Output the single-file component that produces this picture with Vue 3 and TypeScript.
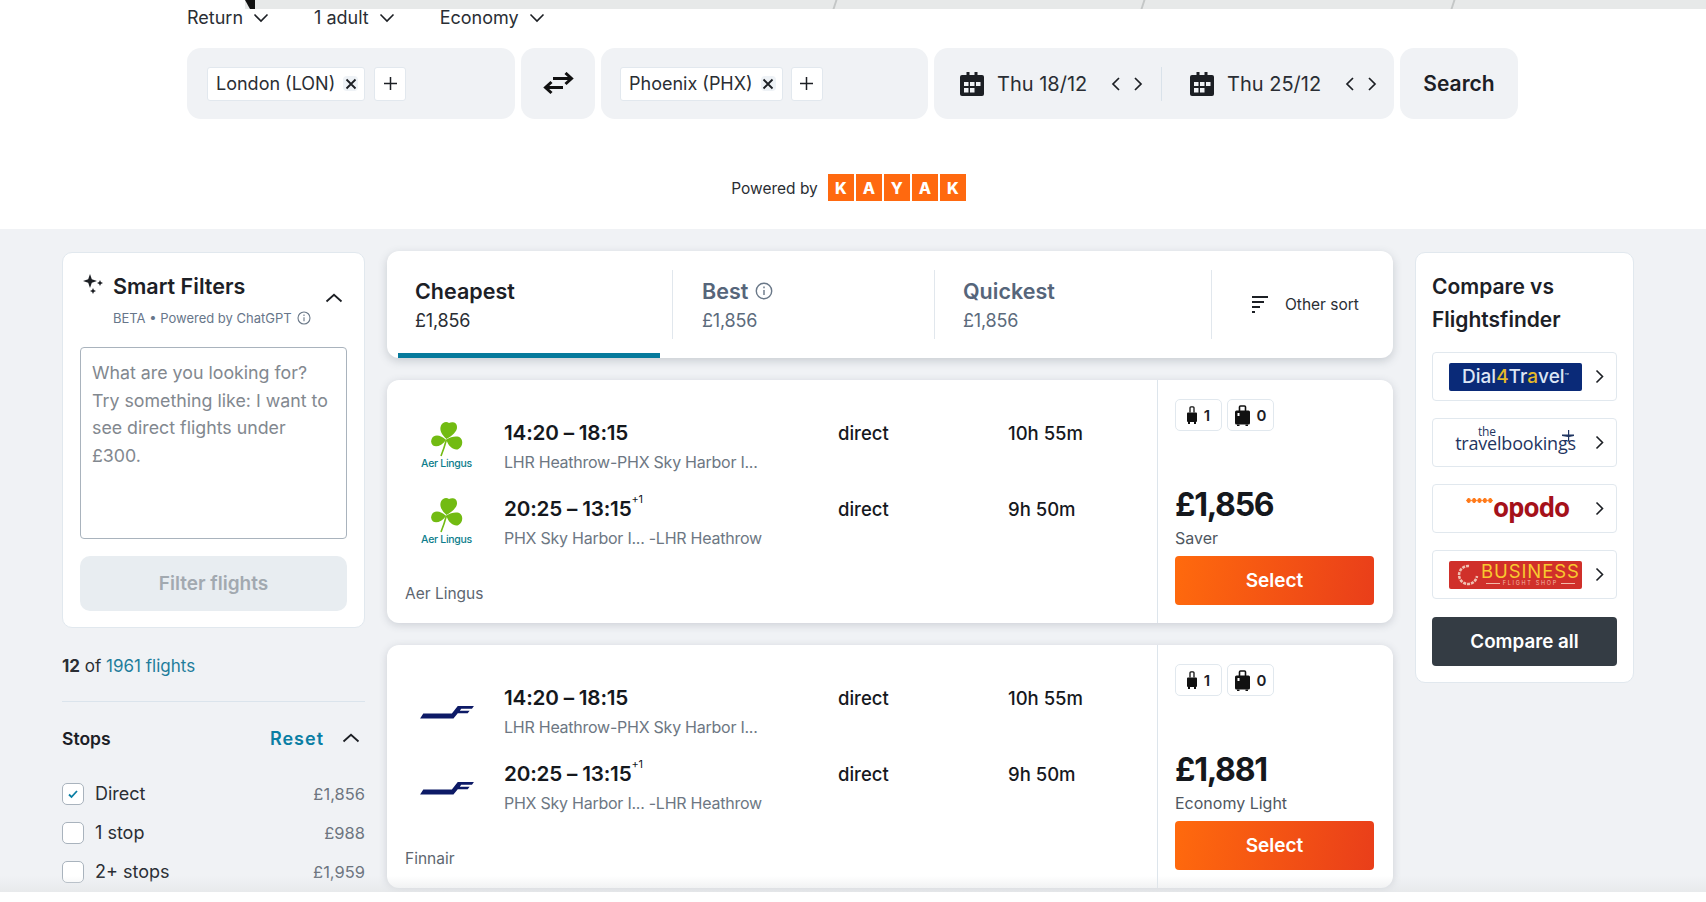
<script setup lang="ts">
interface Leg { time: string; plus: boolean; route: string; duration: string }
interface Flight { kind: 'aer' | 'fin'; airline: string; price: string; fare: string; legs: Leg[] }

const legs: Leg[] = [
  { time: '14:20 – 18:15', plus: false, route: 'LHR Heathrow-PHX Sky Harbor I...', duration: '10h 55m' },
  { time: '20:25 – 13:15', plus: true, route: 'PHX Sky Harbor I... -LHR Heathrow', duration: '9h 50m' },
]
const flights: Flight[] = [
  { kind: 'aer', airline: 'Aer Lingus', price: '£1,856', fare: 'Saver', legs },
  { kind: 'fin', airline: 'Finnair', price: '£1,881', fare: 'Economy Light', legs },
]
const options = ['Return', '1 adult', 'Economy']
const places = ['London (LON)', 'Phoenix (PHX)']
const dates = ['Thu 18/12', 'Thu 25/12']
const kayak = ['K', 'A', 'Y', 'A', 'K']
const stops = [
  { label: 'Direct', price: '£1,856', on: true },
  { label: '1 stop', price: '£988', on: false },
  { label: '2+ stops', price: '£1,959', on: false },
]
const tabs = [
  { name: 'Cheapest', price: '£1,856', info: false },
  { name: 'Best', price: '£1,856', info: true },
  { name: 'Quickest', price: '£1,856', info: false },
]
</script>

<template>
  <div class="page">
    <header class="top">
      <div class="strip">
        <i class="mark"></i><i class="slash s1"></i><i class="slash s2"></i><i class="slash s3"></i>
      </div>
      <div class="options">
        <div v-for="o in options" :key="o" class="option">
          <span>{{ o }}</span>
          <svg width="16" height="10" viewBox="0 0 16 10"><path d="M1.500 1.500 8 8l6.500-6.500" class="ln" stroke-width="1.600" /></svg>
        </div>
      </div>
      <div class="search">
        <template v-for="(p, i) in places" :key="p">
          <div class="pill place">
            <div class="chip">
              <span>{{ p }}</span>
              <span class="x">
                <svg width="12" height="12" viewBox="0 0 12 12"><path d="M1.500 1.500l9 9m0-9-9 9" class="ln" stroke-width="1.800" /></svg>
              </span>
            </div>
            <div class="chip plus">
              <svg width="15" height="15" viewBox="0 0 15 15"><path d="M7.500 1v13M1 7.500h13" class="ln" stroke-width="1.500" /></svg>
            </div>
          </div>
          <div v-if="i === 0" class="pill swap">
            <svg width="32" height="24" viewBox="0 0 32 24">
              <path d="M11 6.500h18M23.500 1l6 5.500-6 5.500" fill="none" stroke="#111" stroke-width="3" />
              <path d="M21 15.500H3.500M9.500 10l-6 5.500 6 5.500" fill="none" stroke="#111" stroke-width="3" />
            </svg>
          </div>
        </template>
        <div class="pill dates">
          <div v-for="d in dates" :key="d" class="date">
            <svg width="24" height="24" viewBox="0 0 24 24">
              <path d="M6.500 0h3v4h-3zM14.500 0h3v4h-3z" fill="#1c1f24" />
              <path d="M0 5a2 2 0 0 1 2-2h20a2 2 0 0 1 2 2v17a2 2 0 0 1-2 2H2a2 2 0 0 1-2-2z" fill="#1c1f24" />
              <path d="M4 10h4.500v4H4zM10 10h4.500v4H10zM16 10h4.500v4H16zM4 16h4.500v4.500H4zM10 16h4.500v4.500H10z" fill="#f0f2f5" />
            </svg>
            <span class="date-text">{{ d }}</span>
            <svg class="arrow" width="10" height="16" viewBox="0 0 10 16"><path d="M8 2 2 8l6 6" class="ln" stroke-width="1.700" /></svg>
            <svg class="arrow next" width="10" height="16" viewBox="0 0 10 16"><path d="m2 2 6 6-6 6" class="ln" stroke-width="1.700" /></svg>
          </div>
        </div>
        <div class="pill go">Search</div>
      </div>
      <div class="powered">
        <span class="powered-text">Powered by</span>
        <div class="kayak"><b v-for="(k, i) in kayak" :key="i">{{ k }}</b></div>
      </div>
    </header>

    <main class="main">
      <aside class="left">
        <section class="smart">
          <div class="smart-head">
            <svg class="spark" width="22" height="22" viewBox="0 0 22 22">
              <path d="M8 1l1.800 5.200L15 8l-5.200 1.800L8 15l-1.800-5.200L1 8l5.200-1.800z" fill="#1c1f24" />
              <path d="M18 7l.9 2.100L21 10l-2.100.9L18 13l-.9-2.100L15 10l2.100-.9z" fill="#1c1f24" />
              <path d="M11 15l.9 2.100L14 18l-2.100.9L11 21l-.9-2.100L8 18l2.100-.9z" fill="#1c1f24" />
            </svg>
            <div>
              <div class="smart-title">Smart Filters</div>
              <div class="smart-sub">
                BETA • Powered by ChatGPT
                <svg width="14" height="14" viewBox="0 0 14 14"><circle cx="7" cy="7" r="6" class="info" /><path d="M7 6.200v4M7 3.500v1.400" class="info" /></svg>
              </div>
            </div>
            <svg class="up" width="18" height="10" viewBox="0 0 18 10"><path d="M1.500 8.500 9 1.800l7.500 6.700" class="ln" stroke-width="1.800" /></svg>
          </div>
          <div class="prompt">What are you looking for? Try something like: I want to see direct flights under £300.</div>
          <div class="filter-btn">Filter flights</div>
        </section>
        <div class="count"><b>12</b> of <span>1961 flights</span></div>
        <div class="stops-head">
          <strong>Stops</strong>
          <span class="reset">Reset</span>
          <svg width="18" height="10" viewBox="0 0 18 10"><path d="M1.500 8.500 9 1.800l7.500 6.700" class="ln" stroke-width="1.800" /></svg>
        </div>
        <div v-for="s in stops" :key="s.label" class="stop">
          <span class="box">
            <svg v-if="s.on" width="12" height="10" viewBox="0 0 12 10"><path d="M2 5.500 4.500 8 10 2" fill="none" stroke="#0a7ea4" stroke-width="1.800" /></svg>
          </span>
          <span class="stop-label">{{ s.label }}</span>
          <span class="stop-price">{{ s.price }}</span>
        </div>
      </aside>

      <section class="center">
        <div class="sort">
          <div v-for="(t, i) in tabs" :key="t.name" class="tab" :class="'tab' + i">
            <div class="tab-name">
              {{ t.name }}
              <svg v-if="t.info" width="18" height="18" viewBox="0 0 14 14"><circle cx="7" cy="7" r="6" class="info" /><path d="M7 6.200v4M7 3.500v1.400" class="info" /></svg>
            </div>
            <div class="tab-price">{{ t.price }}</div>
          </div>
          <div class="tab other">
            <svg width="18" height="20" viewBox="0 0 18 20"><path d="M1 2h16M1 7h12M1 12h8M1 17h3" class="ln" stroke-width="2" /></svg>
            <span>Other sort</span>
          </div>
          <i class="underline"></i>
        </div>

        <article v-for="f in flights" :key="f.airline" class="flight">
          <div class="legs">
            <div v-for="l in f.legs" :key="l.time" class="leg">
              <div class="logo">
                <template v-if="f.kind === 'aer'">
                  <svg width="32" height="36" viewBox="0 0 32 36">
                    <path d="M15.500 18C11 14 8 9 10 4.500 11.500 1.500 15 0 18 2c3-1.500 8-1 8 4 .5 4-5 9-10.500 12z" fill="#72bb12" />
                    <path d="M15 19C11 15 6 13.500 2.500 15.500-.5 18-.5 22 2 24.500 5 26.500 11 25 15 19z" fill="#72bb12" />
                    <path d="M15.500 18.500c4.500-3 11.500-4 14-1.500 3 3 2 9-2 11-3.500 2-10.500-2-12-9.500z" fill="#72bb12" />
                    <path d="M15.500 18.500C14 24 12 30 10 35" fill="none" stroke="#72bb12" stroke-width="1.600" />
                  </svg>
                  <span class="aer">Aer Lingus</span>
                </template>
                <svg v-else width="54" height="14" viewBox="0 0 50 13" class="fin">
                  <path d="M0 12.500 3 8h26.500l5.500-7h15l-1.800 2.400H38.200l-1.300 1.900H46l-1.800 2.400H35L31 12.500z" fill="#0d1a66" />
                </svg>
              </div>
              <div class="times">
                <div class="time">{{ l.time }}<sup v-if="l.plus">+1</sup></div>
                <div class="route">{{ l.route }}</div>
              </div>
              <div class="direct">direct</div>
              <div class="duration">{{ l.duration }}</div>
            </div>
            <div class="airline">{{ f.airline }}</div>
          </div>
          <div class="fare">
            <div class="bags">
              <div class="bag">
                <svg width="10" height="18" viewBox="0 0 10 18">
                  <path d="M3 6.500V1.800Q3 .8 4 .8h2q1 0 1 1v4.700" fill="none" stroke="#111" stroke-width="1.300" />
                  <path d="M1 6.500h8a1 1 0 0 1 1 1V15a1 1 0 0 1-1 1H1a1 1 0 0 1-1-1V7.500a1 1 0 0 1 1-1z" fill="#111" />
                  <path d="M1 16h2v2H1zM7 16h2v2H7z" fill="#111" />
                </svg>
                <span>1</span>
              </div>
              <div class="bag">
                <svg width="15" height="21" viewBox="0 0 15 21">
                  <path d="M4.500 6V2q0-1 1-1h4q1 0 1 1v4" fill="none" stroke="#111" stroke-width="1.600" />
                  <path d="M1.500 5.500h12A1.500 1.500 0 0 1 15 7v11a1.500 1.500 0 0 1-1.500 1.500h-12A1.500 1.500 0 0 1 0 18V7a1.500 1.500 0 0 1 1.500-1.500z" fill="#111" />
                  <path d="M2 19.500h2.500V21H2zM10.500 19.500H13V21h-2.500z" fill="#111" />
                  <path d="M2.500 8h2v3h-2z" fill="#fff" />
                </svg>
                <span>0</span>
              </div>
            </div>
            <div class="price">{{ f.price }}</div>
            <div class="fare-name">{{ f.fare }}</div>
            <div class="select">Select</div>
          </div>
        </article>
      </section>

      <aside class="right">
        <h2>Compare vs Flightsfinder</h2>
        <div class="partner">
          <div class="brand dial">Dial<em>4</em>Tr<em>a</em>vel<sup>™</sup></div>
          <svg class="go-icon" width="9" height="15" viewBox="0 0 9 15"><path d="m1.500 1.500 6 6-6 6" class="ln" stroke-width="1.600" /></svg>
        </div>
        <div class="partner">
          <div class="brand tb">
            <small>the</small>travelbookings
            <svg class="tb-plane" width="12" height="12" viewBox="0 0 12 12"><path d="M6 0h1.200v4.500H12v1.500L7.200 7v3.500l1.500 1H4.500l1.500-1V7L0 6V4.500h6z" fill="#1f3561" /></svg>
          </div>
          <svg class="go-icon" width="9" height="15" viewBox="0 0 9 15"><path d="m1.500 1.500 6 6-6 6" class="ln" stroke-width="1.600" /></svg>
        </div>
        <div class="partner">
          <div class="brand opodo"><i class="dots"></i>opodo</div>
          <svg class="go-icon" width="9" height="15" viewBox="0 0 9 15"><path d="m1.500 1.500 6 6-6 6" class="ln" stroke-width="1.600" /></svg>
        </div>
        <div class="partner">
          <div class="brand biz">
            <svg width="23" height="24" viewBox="0 0 23 24"><path d="M13 3a9 9 0 1 0 8 10" fill="none" stroke="#f0c0b2" stroke-width="2.500" stroke-dasharray="3 1" /></svg>
            <div>
              <b>BUSINESS</b>
              <span><i></i>FLIGHT SHOP<i></i></span>
            </div>
          </div>
          <svg class="go-icon" width="9" height="15" viewBox="0 0 9 15"><path d="m1.500 1.500 6 6-6 6" class="ln" stroke-width="1.600" /></svg>
        </div>
        <div class="compare">Compare all</div>
      </aside>
    </main>
    <i class="fade"></i>
  </div>
</template>

<style>
html, body { margin: 0; background: #fff; }
</style>

<style scoped>
.page {
  position: relative;
  width: 1706px;
  height: 892px;
  overflow: hidden;
  background: #fff;
  color: #1c2026;
  font-family: Inter, "Liberation Sans", sans-serif;
}
.ln { fill: none; stroke: #1c1f24; }
.info { fill: none; stroke: #6a7888; stroke-width: 1.100; }

.top { height: 229px; }
.strip { position: relative; height: 9px; margin-left: 245px; background: #e7e9e9; overflow: hidden; }
.mark { position: absolute; left: 0; top: 0; width: 10px; height: 9px; background: #111; clip-path: polygon(0 0, 100% 0, 100% 100%, 50% 100%); }
.slash { position: absolute; top: 0; width: 2px; height: 9px; background: #c4c7c7; transform: skewX(-18deg); }
.s1 { left: 589px; }
.s2 { left: 897px; }
.s3 { left: 1207px; }

.options { display: flex; gap: 45px; height: 18px; padding-left: 187px; font-size: 18px; line-height: 18px; }
.option { display: flex; align-items: center; gap: 10px; color: #2a2e34; }

.search { display: flex; gap: 6px; margin: 21px 0 0 187px; height: 71px; }
.pill { background: #f0f2f5; border-radius: 14px; display: flex; align-items: center; box-sizing: border-box; }
.place { width: 328px; padding-left: 20px; gap: 9px; }
.pill.place:nth-of-type(n+3) { width: 327px; padding-left: 19px; gap: 8px; }
.chip {
  height: 34px;
  box-sizing: border-box;
  background: #fff;
  border: 1px solid #e2e8ee;
  border-radius: 3px;
  display: flex;
  align-items: center;
  gap: 8px;
  padding: 0 6px 0 8px;
  font-size: 18px;
  color: #2a2e34;
}
.x { width: 15px; height: 15px; display: flex; align-items: center; justify-content: center; background: #eef2f6; border-radius: 4px; }
.plus { width: 32px; justify-content: center; padding: 0; }
.swap { width: 74px; justify-content: center; }
.dates { width: 460px; padding-left: 26px; }
.date { display: flex; align-items: center; height: 34px; }
.date:first-child { width: 201px; }
.date + .date { border-left: 1px solid #d9e2ea; padding-left: 28px; }
.date-text { margin-left: 13px; width: 92px; font-size: 20px; color: #2a2e34; white-space: nowrap; }
.date + .date .date-text { width: 96px; }
.arrow { margin-left: 22px; }
.arrow.next { margin-left: 12px; }
.go { width: 118px; justify-content: center; font-size: 21px; font-weight: 600; }

.powered { display: flex; justify-content: center; align-items: center; gap: 10px; margin: 55px 0 0 -9px; font-size: 15.500px; color: #2a2e34; }
.powered-text { position: relative; top: 1px; }
.kayak { display: flex; gap: 2px; }
.kayak b { width: 26px; height: 27px; background: #ff690f; color: #fff; font-size: 16px; font-weight: 800; display: flex; align-items: center; justify-content: center; }

.main { display: flex; align-items: flex-start; gap: 22px; height: 663px; padding: 22px 0 0 62px; box-sizing: border-box; background: #f0f2f5; }

.left { width: 303px; margin-top: 1px; }
.smart { background: #fff; border: 1px solid #e1e8ee; border-radius: 10px; padding: 16px 17px 16px; height: 376px; box-sizing: border-box; }
.smart-head { position: relative; display: flex; gap: 9px; height: 78px; align-items: flex-start; margin-left: 2px; }
.spark { margin-top: 4px; }
.smart-title { font-size: 21.500px; font-weight: 600; line-height: 34px; white-space: nowrap; }
.smart-sub { margin-top: 7px; font-size: 13px; color: #67768a; display: flex; align-items: center; gap: 5px; white-space: nowrap; }
.up { position: absolute; right: 4px; top: 24px; }
.prompt { height: 192px; box-sizing: border-box; border: 1.500px solid #a9b3bd; border-radius: 4px; padding: 11px; font-size: 17.800px; line-height: 27.500px; color: #82888f; }
.filter-btn { margin-top: 17px; height: 55px; border-radius: 10px; background: #e8edf1; color: #a2a9b0; font-size: 19px; font-weight: 600; display: flex; align-items: center; justify-content: center; }
.count { margin-top: 26px; height: 47px; border-bottom: 1px solid #dbe4ec; font-size: 17px; line-height: 24px; color: #2a2e34; }
.count b { font-weight: 700; }
.count span { color: #1f7d9c; }
.stops-head { display: flex; align-items: center; height: 24px; margin-top: 24px; margin-bottom: 24px; font-size: 17.500px; }
.stops-head strong { flex: 1; font-weight: 600; }
.reset { color: #0a7ea4; font-weight: 600; font-size: 18px; letter-spacing: 1px; margin-right: 18px; }
.stops-head svg { margin-right: 5px; }
.stop { display: flex; align-items: center; height: 39px; font-size: 18px; color: #2a2e34; }
.box { width: 22px; height: 22px; box-sizing: border-box; border: 1.500px solid #a9b3bd; border-radius: 5px; background: #fff; display: flex; align-items: center; justify-content: center; }
.stop-label { flex: 1; margin-left: 11px; }
.stop-price { font-size: 16.500px; color: #6d7580; }

.center { width: 1006px; display: flex; flex-direction: column; gap: 22px; }
.sort { position: relative; display: flex; height: 107px; background: #fff; border-radius: 12px; box-shadow: 0 3px 10px rgba(60, 72, 88, .22); }
.tab { margin-top: 19px; height: 69px; box-sizing: border-box; color: #56657a; }
.tab + .tab { border-left: 1px solid #e1e7ed; }
.tab0 { width: 285px; padding-left: 28px; color: #1c2026; }
.tab1 { width: 262px; padding-left: 29px; }
.tab2 { width: 277px; padding-left: 28px; }
.tab-name { display: flex; align-items: center; gap: 7px; font-size: 21.500px; font-weight: 600; line-height: 26px; margin-top: 8px; }
.tab-price { font-size: 18px; letter-spacing: -.2px; line-height: 24px; margin-top: 5px; color: #5c6b7c; }
.tab0 .tab-price { color: #2a2e34; }
.other { flex: 1; display: flex; align-items: center; gap: 16px; padding-left: 39px; font-size: 15.500px; color: #2a2e34; }
.underline { position: absolute; left: 11px; bottom: 0; width: 262px; height: 5px; background: #067a9c; }

.flight { display: flex; height: 243px; background: #fff; border-radius: 12px; box-shadow: 0 2px 8px rgba(60, 72, 88, .2); }
.legs { width: 771px; padding-top: 40px; box-sizing: border-box; border-right: 1px solid #dde5ec; }
.leg { display: grid; grid-template-columns: 117px 334px 170px 1fr; height: 76px; align-items: start; }
.logo { height: 50px; display: flex; flex-direction: column; align-items: center; justify-content: center; padding-left: 2px; }
.fin { margin-top: 3px; }
.aer { font-size: 10.500px; font-weight: 500; letter-spacing: -.3px; color: #0d7d8c; line-height: 13px; margin-top: 0; white-space: nowrap; }
.times { padding-top: 1px; }
.time { font-size: 20.700px; font-weight: 600; line-height: 24px; white-space: nowrap; letter-spacing: -.2px; color: #15181d; }
.time sup { font-size: 11px; font-weight: 400; line-height: 0; vertical-align: 13px; }
.route { margin-top: 6px; font-size: 16px; line-height: 22px; color: #6d7783; white-space: nowrap; letter-spacing: -.25px; }
.direct, .duration { padding-top: 1px; font-weight: 500; line-height: 24px; color: #15181d; }
.direct { font-size: 18.500px; }
.duration { font-size: 18.500px; white-space: nowrap; }
.airline { margin: 10px 0 0 18px; font-size: 15.500px; line-height: 24px; color: #5d6670; }
.fare { flex: 1; padding: 19px 19px 18px 17px; display: flex; flex-direction: column; }
.bags { display: flex; gap: 5px; }
.bag { width: 47px; height: 32px; box-sizing: border-box; border: 1px solid #e1e8ee; border-radius: 5px; display: flex; align-items: center; justify-content: center; gap: 7px; font-size: 15px; font-weight: 600; }
.price { margin-top: auto; font-size: 32px; font-weight: 700; letter-spacing: -1.300px; line-height: 40px; color: #15181d; }
.fare-name { margin: 1px 0 6px; font-size: 16px; line-height: 24px; color: #4f5761; }
.select { height: 49px; border-radius: 4px; background: linear-gradient(100deg, #ff6a0d, #e93e1a); color: #fff; font-size: 19px; font-weight: 600; display: flex; align-items: center; justify-content: center; }

.right { width: 219px; height: 431px; margin-top: 1px; box-sizing: border-box; background: #fff; border: 1px solid #e1e8ee; border-radius: 10px; padding: 17px 16px; }
h2 { margin: 0 0 16px; font-size: 21px; font-weight: 600; line-height: 33px; color: #1c2026; }
.partner { position: relative; height: 49px; box-sizing: border-box; background: #fff; border: 1px solid #e1e8ee; border-radius: 4px; margin-bottom: 17px; display: flex; align-items: center; padding-left: 16px; }
.go-icon { position: absolute; left: 162px; top: 16px; }
.brand { width: 133px; height: 28px; border-radius: 2px; display: flex; align-items: center; justify-content: center; white-space: nowrap; }
.dial { background: #0a2a78; color: #dde6f5; font-size: 19px; font-weight: 500; }
.dial em { font-style: normal; color: #e5b92a; }
.dial sup { font-size: 7px; line-height: 0; vertical-align: 8px; }
.tb { position: relative; color: #1f3561; font-size: 18px; line-height: 20px; padding-top: 1px; box-sizing: border-box; letter-spacing: -.2px; font-family: "Open Sans", sans-serif; }
.tb small { position: absolute; left: 29px; top: -4px; font-size: 12px; line-height: 13px; }
.tb-plane { position: absolute; left: 113px; top: 1px; }
.opodo { position: relative; justify-content: flex-start; color: #a5111a; font-size: 26px; font-weight: 700; line-height: 28px; padding: 0 0 4px 44px; box-sizing: border-box; letter-spacing: -1px; font-family: "Open Sans", sans-serif; }
.dots { position: absolute; left: 17px; top: 3px; width: 27px; height: 5px; background: radial-gradient(circle at 2.700px 2.500px, #ff7a1a 2.200px, transparent 2.500px) 0 0 / 5.400px 5px repeat-x; }
.biz { background: #d0302a; color: #f8c92f; justify-content: flex-start; padding-left: 7px; box-sizing: border-box; gap: 2px; }
.biz div { display: flex; flex-direction: column; align-items: center; line-height: 1; }
.biz b { font-size: 18.500px; font-weight: 400; letter-spacing: .9px; line-height: 18px; }
.biz span { display: flex; align-items: center; gap: 3px; font-size: 5.500px; letter-spacing: 1.700px; color: #f3b9a8; line-height: 7px; }
.biz span i { width: 14px; height: 1px; background: #f3b9a8; }
.compare { height: 49px; margin-top: 18px; border-radius: 4px; background: #343c44; color: #fff; font-size: 18.800px; font-weight: 600; display: flex; align-items: center; justify-content: center; }

.fade { position: absolute; left: 0; right: 0; bottom: 0; height: 16px; background: linear-gradient(rgba(255, 255, 255, 0), rgba(228, 230, 232, .7)); }
</style>
